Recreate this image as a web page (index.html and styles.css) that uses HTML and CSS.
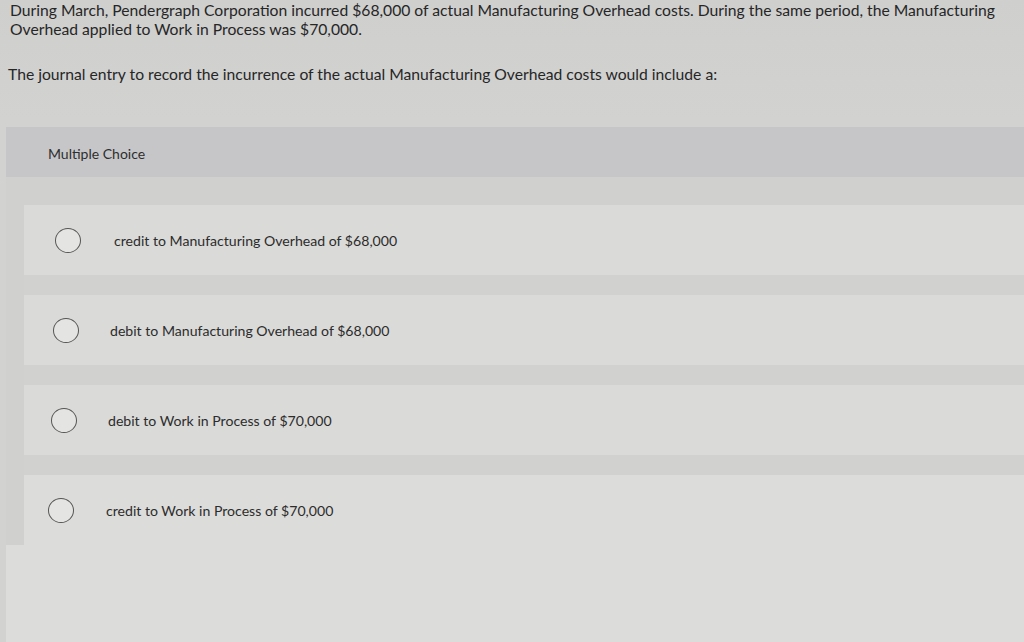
FILE: index.html
```html
<!DOCTYPE html>
<html>
<head>
<meta charset="utf-8">
<link rel="stylesheet" href="styles.css">
</head>
<body>
<div class="page">
  <div class="question">
    <p class="q-line">During March, Pendergraph Corporation incurred $68,000 of actual Manufacturing Overhead costs. During the same period, the Manufacturing Overhead applied to Work in Process was $70,000.</p>
  </div>
  <p class="prompt">The journal entry to record the incurrence of the actual Manufacturing Overhead costs would include a:</p>
  <div class="panel">
    <div class="panel-head">Multiple Choice</div>
    <div class="options">
      <div class="option o1"><span class="radio"></span><span class="label">credit to Manufacturing Overhead of $68,000</span></div>
      <div class="sep"></div>
      <div class="option o2"><span class="radio"></span><span class="label">debit to Manufacturing Overhead of $68,000</span></div>
      <div class="sep"></div>
      <div class="option o3"><span class="radio"></span><span class="label">debit to Work in Process of $70,000</span></div>
      <div class="sep"></div>
      <div class="option o4"><span class="radio"></span><span class="label">credit to Work in Process of $70,000</span></div>
    </div>
  </div>
</div>
</body>
</html>
```
FILE: styles.css
```css
html, body {
  margin: 0;
  padding: 0;
}
body {
  background: #d8d8d6;
  font-family: Lato, "Liberation Sans", sans-serif;
  color: #262626;
  width: 1024px;
  height: 642px;
  overflow: hidden;
}
.page {
  background: linear-gradient(#cfcfce 0px, #d2d2d1 120px);
}
.question {
  padding: 1px 20px 0 10px;
}
.q-line {
  margin: 0;
  font-size: 15.7px;
  line-height: 19px;
}
.prompt {
  margin: 0;
  padding: 26px 0 0 8px;
  font-size: 15.7px;
  line-height: 19px;
}
.panel {
  margin: 43px 0 0 6px;
}
.panel-head {
  height: 50px;
  background: #c6c6c8;
  padding-left: 42px;
  display: flex;
  align-items: center;
  font-size: 14px;
  color: #2e2e2e;
  padding-top: 2px;
  box-sizing: border-box;
}
.options {
  background: #d0d1cf;
  padding: 28px 0 0 18px;
  display: flex;
  flex-direction: column;
}
.option {
  height: 70px;
  background: #dadad8;
  display: flex;
  align-items: center;
  font-size: 14.1px;
  color: #2c2c2c;
}
.sep {
  height: 20px;
  background: #d1d2d0;
}
.radio {
  width: 26px;
  height: 25px;
  border: 1.2px solid #555;
  border-radius: 50%;
  box-sizing: border-box;
  flex: none;
  background: #e4e4e2;
}
.o1 { padding-left: 31px; }
.o1 .radio { margin-right: 33px; }
.o2 { padding-left: 29px; }
.o2 .radio { margin-right: 31px; }
.o3 { padding-left: 27px; }
.o3 .radio { margin-right: 31px; }
.o4 { padding-left: 24px; background: #dcdcda; }
.o4 .radio { margin-right: 32px; }
.options::after {
  content: "";
  display: block;
  height: 120px;
  margin-left: -18px;
  background: #dcdcda;
}
```
